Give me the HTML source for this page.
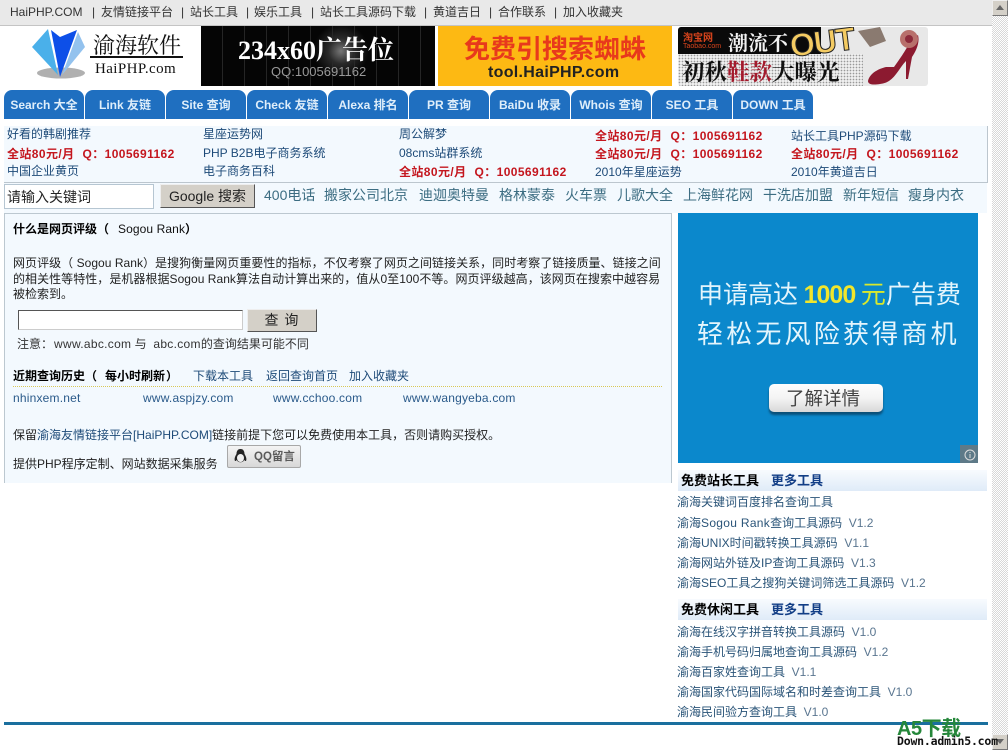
<!DOCTYPE html>
<html lang="zh-CN"><head><meta charset="utf-8"><title>HaiPHP</title>
<style>
html,body{margin:0;padding:0;background:#fff}
body{position:relative;width:1008px;height:750px;overflow:hidden;font:12px/16px "Liberation Sans","Noto Sans CJK SC",sans-serif;color:#222}
.a,.t{position:absolute;white-space:nowrap}
a{color:inherit;text-decoration:none}
.n{color:#1d4a78}
.r{color:#c4161e;font-weight:bold;letter-spacing:.4px}
.r i{font-style:normal;margin-left:8px}
.k{font-size:14px;color:#3c6d82;line-height:20px}
.h{font-weight:bold;color:#000}
.tab{position:absolute;top:90px;height:29px;width:80px;background:#1f6fc0;border-radius:8px 8px 0 0;color:#dfeefa;font-weight:bold;font-size:12px;line-height:31px;text-align:center}
.l{color:#2a5478}
.v{color:#5a7690}
.hd{position:absolute;left:678px;width:309px;height:21px;background:linear-gradient(#f8fbfe,#dfebf8)}
.hh{font-size:13px;font-weight:bold}
.w{color:#2a5a8a;letter-spacing:.2px}
.sb{position:absolute;left:992px;top:0;width:16px;height:750px;background-color:#fff;background-image:conic-gradient(#d8d8d8 25%,#fff 25% 50%,#d8d8d8 50% 75%,#fff 75%);background-size:2px 2px}
.btn{position:absolute;left:992px;width:16px;height:16px;background:#d4d0c8;border:1px solid;border-color:#eee #777 #777 #eee;box-sizing:border-box}
</style></head><body>

<div class="a" style="left:0;top:0;width:992px;height:25px;background:#e9e9e9;border-bottom:1px solid #c4c4c4"></div>
<span class="t" style="left:10px;top:4px;color:#333"><a href="#">HaiPHP.COM</a></span>
<span class="t" style="left:92px;top:4px;color:#333">|</span><span class="t" style="left:101px;top:4px;color:#333">友情链接平台</span>
<span class="t" style="left:181px;top:4px;color:#333">|</span><span class="t" style="left:190px;top:4px;color:#333">站长工具</span>
<span class="t" style="left:246px;top:4px;color:#333">|</span><span class="t" style="left:254px;top:4px;color:#333">娱乐工具</span>
<span class="t" style="left:311px;top:4px;color:#333">|</span><span class="t" style="left:320px;top:4px;color:#333">站长工具源码下载</span>
<span class="t" style="left:424px;top:4px;color:#333">|</span><span class="t" style="left:433px;top:4px;color:#333">黄道吉日</span>
<span class="t" style="left:489px;top:4px;color:#333">|</span><span class="t" style="left:498px;top:4px;color:#333">合作联系</span>
<span class="t" style="left:554px;top:4px;color:#333">|</span><span class="t" style="left:563px;top:4px;color:#333">加入收藏夹</span>

<!-- logo -->
<svg class="a" style="left:30px;top:27px" width="60" height="54" viewBox="0 0 60 54">
<ellipse cx="31" cy="46" rx="24" ry="5.500" fill="#b0b0b0"/>
<path d="M2 20 L18 2 L28 48 Z" fill="#4ab0ea"/>
<path d="M21 3 L30 10 L47 3 L30 50 Z" fill="#0d4fe8"/>
<path d="M48 5 L55 20 L32 48 Z" fill="#93c2ee"/>
</svg>
<span class="t" style="left:93px;top:30px;font:22px/30px 'Noto Serif CJK SC',serif;color:#111">渝海软件</span>
<div class="a" style="left:90px;top:56px;width:93px;height:2px;background:#111"></div>
<span class="t" style="left:95px;top:60px;font:15px/18px 'Liberation Serif',serif;color:#111;letter-spacing:.4px">HaiPHP.com</span>

<!-- banner 1 -->
<div class="a" style="left:201px;top:26px;width:234px;height:60px;background:#050505 repeating-linear-gradient(90deg,#050505 0 21px,#252525 21px 22px);overflow:hidden">
<div class="a" style="left:110px;top:-5px;width:60px;height:60px;background:radial-gradient(circle,#777 0,#2a2a2a 30%,transparent 65%)"></div>
<span class="t" style="left:37px;top:9px;font:bold 26px/32px 'Liberation Serif','Noto Serif CJK SC',serif;color:#fff">234x60广告位</span>
<span class="t" style="left:70px;top:37px;font:13px/18px 'Liberation Sans',sans-serif;color:#999">QQ:1005691162</span>
</div>
<!-- banner 2 -->
<div class="a" style="left:438px;top:26px;width:234px;height:60px;background:#fdb913;overflow:hidden">
<span class="t" style="left:26px;top:6px;font:bold 26px/32px 'Noto Sans CJK SC',sans-serif;color:#e8391c">免费引搜索蜘蛛</span>
<span class="t" style="left:50px;top:37px;font:bold 16px/20px 'Liberation Sans',sans-serif;color:#222;letter-spacing:.3px">tool.HaiPHP.com</span>
</div>
<!-- banner 3 -->
<div class="a" style="left:678px;top:27px;width:250px;height:59px;background:#e8e8e8;border-radius:3px;overflow:hidden">
<div class="a" style="left:0;top:27px;width:185px;height:32px;background-image:radial-gradient(#999 35%,#eee 40%);background-size:3px 3px"></div>
<div class="a" style="left:0;top:0;width:143px;height:27px;background:#0a0a0a"></div>
<span class="t" style="left:5px;top:4px;font:bold 10px/12px 'Noto Sans CJK SC',sans-serif;color:#d8441c">淘宝网</span>
<span class="t" style="left:5px;top:15px;font:7px/9px 'Liberation Sans',sans-serif;color:#d8441c">Taobao.com</span>
<span class="t" style="left:50px;top:2px;font:bold 20px/26px 'Noto Serif CJK SC',serif;color:#f2f2f2">潮流不</span>
<span class="t" style="left:112px;top:1px;font:bold 32px/36px 'Liberation Sans',sans-serif;color:#f4cb62;-webkit-text-stroke:1px #222;letter-spacing:-1px;transform:rotate(-7deg);transform-origin:left center">OUT</span>
<span class="t" style="left:4px;top:29px;font:bold 22.500px/31px 'Noto Serif CJK SC',serif;color:#111">初秋<span style="color:#a31a2c">鞋款</span>大曝光</span>
<svg class="a" style="left:170px;top:0" width="80" height="59" viewBox="0 0 80 59">
<path d="M10 4 L32 0 L38 14 L22 20 Z" fill="#8a7a70"/>
<path d="M20 54 C22 46 30 42 38 40 L46 40 C50 34 58 24 62 14 L70 8 C72 16 68 24 64 30 L60 52 L58 52 L58 34 C50 42 46 56 32 57 C26 58 20 58 20 54 Z" fill="#8c1a30"/>
<circle cx="61" cy="12" r="9" fill="#b8706c"/>
<circle cx="61" cy="12" r="4" fill="#8c2a3a"/>
</svg>
</div>

<!-- tabs -->
<div class="tab" style="left:4px">Search 大全</div>
<div class="tab" style="left:85px">Link 友链</div>
<div class="tab" style="left:166px">Site 查询</div>
<div class="tab" style="left:247px">Check 友链</div>
<div class="tab" style="left:328px">Alexa 排名</div>
<div class="tab" style="left:409px">PR 查询</div>
<div class="tab" style="left:490px">BaiDu 收录</div>
<div class="tab" style="left:571px">Whois 查询</div>
<div class="tab" style="left:652px">SEO 工具</div>
<div class="tab" style="left:733px">DOWN 工具</div>

<!-- link panel -->
<div class="a" style="left:4px;top:126px;width:983px;height:56px;background:#f3f9fe;border-right:1px solid #bcc6ce;border-bottom:1px solid #bcc6ce"></div>
<div class="a" style="left:4px;top:183px;width:983px;height:30px;background:#f3f9fe"></div>
<span class="t n" style="left:7px;top:126px">好看的韩剧推荐</span>
<span class="t r" style="left:7px;top:146px">全站80元/月<i>Q：</i>1005691162</span>
<span class="t n" style="left:7px;top:163px">中国企业黄页</span>
<span class="t n" style="left:203px;top:126px">星座运势网</span>
<span class="t n" style="left:203px;top:145px">PHP B2B电子商务系统</span>
<span class="t n" style="left:203px;top:163px">电子商务百科</span>
<span class="t n" style="left:399px;top:126px">周公解梦</span>
<span class="t n" style="left:399px;top:145px">08cms站群系统</span>
<span class="t r" style="left:399px;top:164px">全站80元/月<i>Q：</i>1005691162</span>
<span class="t r" style="left:595px;top:128px">全站80元/月<i>Q：</i>1005691162</span>
<span class="t r" style="left:595px;top:146px">全站80元/月<i>Q：</i>1005691162</span>
<span class="t n" style="left:595px;top:164px">2010年星座运势</span>
<span class="t n" style="left:791px;top:128px">站长工具PHP源码下载</span>
<span class="t r" style="left:791px;top:146px">全站80元/月<i>Q：</i>1005691162</span>
<span class="t n" style="left:791px;top:164px">2010年黄道吉日</span>

<!-- search row -->
<div class="a" style="left:4px;top:184px;width:148px;height:23px;background:#fff;border:1px solid #b6c6d2;font-size:14px;line-height:24px;color:#222;text-indent:2px">请输入关键词</div>
<div class="a" style="left:160px;top:184px;width:93px;height:22px;background:#d4d0c8;border-top:1px solid #eee;border-left:1px solid #eee;border-right:1px solid #555;border-bottom:1px solid #555;font-size:14px;line-height:22px;text-align:center;color:#222">Google 搜索</div>
<span class="t k" style="left:264px;top:185px">400电话</span>
<span class="t k" style="left:324px;top:185px">搬家公司北京</span>
<span class="t k" style="left:419px;top:185px">迪迦奥特曼</span>
<span class="t k" style="left:499px;top:185px">格林蒙泰</span>
<span class="t k" style="left:565px;top:185px">火车票</span>
<span class="t k" style="left:617px;top:185px">儿歌大全</span>
<span class="t k" style="left:683px;top:185px">上海鲜花网</span>
<span class="t k" style="left:763px;top:185px">干洗店加盟</span>
<span class="t k" style="left:843px;top:185px">新年短信</span>
<span class="t k" style="left:908px;top:185px">瘦身内衣</span>

<!-- main panel -->
<div class="a" style="left:4px;top:213px;width:666px;height:269px;background:#f3f9fe;border:1px solid #bcc8d0;border-bottom:0"></div>
<span class="t h" style="left:13px;top:221px">什么是网页评级（</span><span class="t" style="left:118px;top:221px;color:#111;letter-spacing:.1px">Sogou Rank</span><span class="t h" style="left:185px;top:221px">）</span>
<span class="t" style="left:13px;top:255px;letter-spacing:.04px">网页评级（ Sogou Rank）是搜狗衡量网页重要性的指标，不仅考察了网页之间链接关系，同时考察了链接质量、链接之间</span>
<span class="t" style="left:13px;top:271px;letter-spacing:.04px">的相关性等特性，是机器根据Sogou Rank算法自动计算出来的，值从0至100不等。网页评级越高，该网页在搜索中越容易</span>
<span class="t" style="left:13px;top:286px">被检索到。</span>
<div class="a" style="left:18px;top:310px;width:223px;height:18px;background:#fff;border:1px solid;border-color:#555 #ccc #ccc #555"></div>
<div class="a" style="left:247px;top:309px;width:68px;height:21px;background:#d4d0c8;border:1px solid;border-color:#eee #555 #555 #eee;text-align:center;font-size:14px;line-height:20px;color:#222;letter-spacing:1px">查 询</div>
<span class="t" style="left:17px;top:336px;color:#333">注意：<span style="letter-spacing:.3px;margin-left:1px">www.abc.com</span> 与 &nbsp;<span style="letter-spacing:.3px">abc.com</span>的查询结果可能不同</span>
<span class="t h" style="left:13px;top:368px">近期查询历史（</span><span class="t h" style="left:105px;top:368px">每小时刷新</span><span class="t h" style="left:166px;top:368px">）</span>
<span class="t n" style="left:193px;top:368px">下载本工具</span>
<span class="t n" style="left:266px;top:368px">返回查询首页</span>
<span class="t n" style="left:349px;top:368px">加入收藏夹</span>
<div class="a" style="left:13px;top:386px;width:649px;border-top:1px dotted #d8c858"></div>
<span class="t w" style="left:13px;top:390px">nhinxem.net</span>
<span class="t w" style="left:143px;top:390px">www.aspjzy.com</span>
<span class="t w" style="left:273px;top:390px">www.cchoo.com</span>
<span class="t w" style="left:403px;top:390px">www.wangyeba.com</span>
<span class="t" style="left:13px;top:427px">保留<span class="n">渝海友情链接平台[HaiPHP.COM]</span>链接前提下您可以免费使用本工具，否则请购买授权。</span>
<span class="t" style="left:13px;top:456px">提供PHP程序定制、网站数据采集服务</span>
<div class="a" style="left:227px;top:445px;width:72px;height:21px;background:linear-gradient(#f4f4f4,#d8d8d8);border:1px solid #a8a8a8;border-radius:2px">
<svg class="a" style="left:4px;top:2px" width="17" height="17" viewBox="0 0 17 17"><path d="M8.500 1C5.500 1 4.500 3.500 4.500 6C3 8.500 2 11 3 13C4.500 13 4.500 12 5 12C5.500 15 11.500 15 12 12C12.500 12 12.500 13 14 13C15 11 14 8.500 12.500 6C12.500 3.500 11.500 1 8.500 1Z" fill="#222"/><ellipse cx="8.500" cy="10" rx="3.500" ry="4" fill="#eee"/></svg>
<span class="t" style="left:26px;top:3px;font-weight:bold;color:#5a5a5a;font-size:11.500px;line-height:16px">QQ留言</span>
</div>

<!-- ad -->
<div class="a" style="left:678px;top:213px;width:300px;height:250px;background:#0b88cc;overflow:hidden">
<span class="t" style="left:20px;top:62px;font:25px/36px 'Noto Sans CJK SC',sans-serif;color:#e4f5fc">申请高达 <span style="color:#f1e62b;font-weight:bold;font-family:'Liberation Sans',sans-serif;letter-spacing:-1px">1000</span> <span style="color:#d9e82c">元</span>广告费</span>
<span class="t" style="left:19px;top:102px;font:26px/36px 'Noto Sans CJK SC',sans-serif;color:#e4f5fc;letter-spacing:3.200px">轻松无风险获得商机</span>
<div class="a" style="left:91px;top:171px;width:114px;height:28px;padding-right:0;background:linear-gradient(#fdfdfd 0,#f4f4f4 50%,#d8d8d8 100%);border-radius:5px;box-shadow:0 3px 2px #0a4f78"></div>
<span class="t" style="left:108px;top:171px;font:18.500px/28px 'Noto Sans CJK SC',sans-serif;color:#444">了解详情</span>
<div class="a" style="left:282px;top:232px;width:18px;height:18px;background:#5e7a88"></div>
<svg class="a" style="left:286px;top:236px" width="12" height="12" viewBox="0 0 12 12"><circle cx="6" cy="6" r="5" fill="none" stroke="#ddd"/><path d="M6 5V9M6 3V4" stroke="#ddd"/></svg>
</div>

<!-- sidebar -->
<div class="hd" style="top:470px"></div>
<span class="t h hh" style="left:681px;top:473px">免费站长工具</span><span class="t hh" style="left:771px;top:473px;color:#123e86">更多工具</span>
<span class="t l" style="left:677px;top:494px">渝海关键词百度排名查询工具</span>
<span class="t l" style="left:677px;top:515px">渝海<span style="letter-spacing:.3px">Sogou Rank</span>查询工具源码 &nbsp;<span class="v">V1.2</span></span>
<span class="t l" style="left:677px;top:535px">渝海UNIX时间戳转换工具源码 &nbsp;<span class="v">V1.1</span></span>
<span class="t l" style="left:677px;top:555px">渝海网站外链及IP查询工具源码 &nbsp;<span class="v">V1.3</span></span>
<span class="t l" style="left:677px;top:575px">渝海SEO工具之搜狗关键词筛选工具源码 &nbsp;<span class="v">V1.2</span></span>
<div class="hd" style="top:599px"></div>
<span class="t h hh" style="left:681px;top:602px">免费休闲工具</span><span class="t hh" style="left:771px;top:602px;color:#123e86">更多工具</span>
<span class="t l" style="left:677px;top:624px">渝海在线汉字拼音转换工具源码 &nbsp;<span class="v">V1.0</span></span>
<span class="t l" style="left:677px;top:644px">渝海手机号码归属地查询工具源码 &nbsp;<span class="v">V1.2</span></span>
<span class="t l" style="left:677px;top:664px">渝海百家姓查询工具 &nbsp;<span class="v">V1.1</span></span>
<span class="t l" style="left:677px;top:684px">渝海国家代码国际域名和时差查询工具 &nbsp;<span class="v">V1.0</span></span>
<span class="t l" style="left:677px;top:704px">渝海民间验方查询工具 &nbsp;<span class="v">V1.0</span></span>

<div class="a" style="left:4px;top:722px;width:984px;height:3px;background:#1a6f9e"></div>

<!-- scrollbar -->
<div class="sb"></div>
<div class="btn" style="top:0"><svg class="a" style="left:3px;top:4px" width="8" height="6"><path d="M4 0L8 5H0Z" fill="#666"/></svg></div>
<div class="btn" style="top:734px"><svg class="a" style="left:3px;top:4px" width="8" height="6"><path d="M0 0H8L4 5Z" fill="#666"/></svg></div>

<!-- watermark -->
<span class="t" style="left:897px;top:716px;font:bold 20px/26px 'Liberation Sans','Noto Sans CJK SC',sans-serif;color:#25873a;letter-spacing:-.5px">A5下载</span>
<span class="t" style="left:897px;top:734px;font:bold 11.500px/15px 'DejaVu Sans Mono','Liberation Mono',monospace;color:#111;letter-spacing:-.2px">Down.admin5.com</span>
</body></html>
